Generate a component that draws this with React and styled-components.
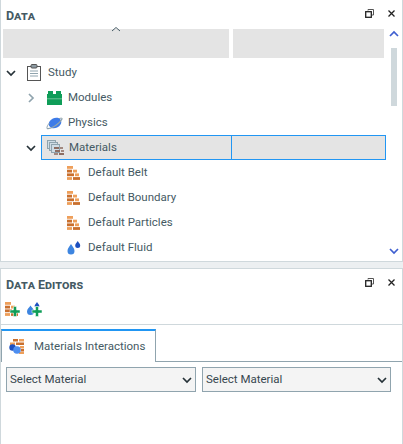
import styled, { createGlobalStyle } from 'styled-components'

const GlobalStyle = createGlobalStyle`
  html, body { margin: 0; padding: 0; background: #eceff1; }
  * { box-sizing: border-box; }
`

const Page = styled.div`
  width: 403px;
  height: 444px;
  overflow: hidden;
  display: flex;
  flex-direction: column;
  gap: 6px;
  font-family: Roboto, 'Liberation Sans', sans-serif;
  font-size: 11.5px;
  color: #455a64;
  background: #eceff1;
`
const Panel = styled.section`
  height: ${(p) => p.$height}px;
  background: #fff;
  border: 1px solid #cfd8dc;
  border-top: ${(p) => (p.$top ? '1px solid #cfd8dc' : 'none')};
  border-bottom: ${(p) => (p.$bottom ? '1px solid #cfd8dc' : 'none')};
  display: flex;
  flex-direction: column;
  flex: none;
`
const TitleBar = styled.header`
  height: 29px;
  flex: none;
  display: flex;
  align-items: center;
  justify-content: space-between;
  padding: 0 7px 0 5px;
`
const Title = styled.h2`
  margin: 2px 0 0;
  font-size: 12.5px;
  line-height: 16px;
  font-weight: 700;
  font-variant: small-caps;
  color: #455a64;
`
const WindowButtons = styled.div`
  display: flex;
  align-items: center;
  gap: 14px;
  margin-top: -2px;
`
const DataBody = styled.div`
  flex: 1;
  display: flex;
  min-height: 0;
`
const TreeArea = styled.div`
  width: 386px;
  padding-left: 2px;
`
const HeaderRow = styled.div`
  display: flex;
  gap: 4px;
  height: 29px;
`
const HeaderCell = styled.div`
  width: ${(p) => p.$width}px;
  background: #e4e4e4;
  display: flex;
  justify-content: center;
`
const SortCaret = styled.svg`
  margin-top: -3px;
`
const Tree = styled.div`
  padding-top: 2px;
`
const Row = styled.div`
  height: 25px;
  display: flex;
  align-items: center;
  padding-left: ${(p) => p.$indent}px;
`
const Toggle = styled.span`
  width: 14px;
  margin-right: ${(p) => p.$gap}px;
  flex: none;
  display: flex;
  justify-content: center;
`
const SelectedCell = styled.div`
  width: 345px;
  height: 25px;
  display: flex;
  align-items: center;
  background: #e4e4e4;
  border: 1px solid #2196f3;
  padding-left: 5px;
`
const ColumnDivider = styled.span`
  margin-left: auto;
  margin-right: 153px;
  width: 1px;
  align-self: stretch;
  background: #2196f3;
`
const IconSlot = styled.span`
  width: ${(p) => p.$width}px;
  flex: none;
  display: flex;
  align-items: center;
`
const Label = styled.span`
  line-height: 16px;
  white-space: nowrap;
  margin-top: -1px;
`
const ScrollTrack = styled.div`
  width: 12px;
  margin-left: 1px;
  display: flex;
  flex-direction: column;
  align-items: center;
  padding-bottom: 5px;
`
const ScrollThumb = styled.div`
  width: 6px;
  height: 58px;
  margin-top: 9px;
  background: #cfd8dc;
`
const ScrollSpacer = styled.div`
  flex: 1;
`
const Toolbar = styled.div`
  height: 27px;
  flex: none;
  display: flex;
  align-items: center;
  gap: 7px;
  padding: 0 0 4px 4px;
  border-bottom: 1px solid #cfd8dc;
`
const TabStrip = styled.div`
  height: 37px;
  flex: none;
  padding-top: 4px;
  border-bottom: 1px solid #90a4ae;
`
const Tab = styled.div`
  width: 155px;
  height: 33px;
  display: flex;
  align-items: center;
  gap: 9px;
  padding-left: 7px;
  background: #fff;
  border: 1px solid #90a4ae;
  border-top: 2px solid #2196f3;
  border-bottom: none;
`
const Selects = styled.div`
  display: flex;
  gap: 6px;
  padding: 5px 0 0 5px;
`
const SelectBox = styled.div`
  width: ${(p) => p.$width}px;
  height: 25px;
  display: flex;
  align-items: center;
  justify-content: space-between;
  padding: 0 3px;
  background: #f4f4f4;
  border: 1px solid #90a4ae;
  color: #37474f;
`

const Chevron = ({ dir = 'down', color = '#263238' }) => {
  const points = {
    down: '1,3 5,7 9,3',
    up: '1,7 5,3 9,7',
    right: '3,1 7,5 3,9',
  }
  return (
    <svg width="10" height="10" viewBox="0 0 10 10">
      <polyline points={points[dir]} fill="none" stroke={color} strokeWidth="1.7" />
    </svg>
  )
}

const RestoreIcon = () => (
  <svg width="9" height="9" viewBox="0 0 9 9">
    <path d="M3 1.500V.5h5.500v5.500H7" fill="none" stroke="#555" />
    <rect x=".7" y="2.700" width="5.600" height="5.600" fill="none" stroke="#222" strokeWidth="1.300" />
  </svg>
)

const CloseIcon = () => (
  <svg width="7" height="7" viewBox="0 0 7 7">
    <path d="M.5.5l6 6M6.500.5l-6 6" stroke="#222" strokeWidth="1.300" />
  </svg>
)

const ClipboardIcon = () => (
  <svg width="14" height="17" viewBox="0 0 14 17">
    <rect x=".5" y="2.500" width="13" height="14" fill="#fff" stroke="#555" />
    <rect x="4" y=".5" width="6" height="3.500" rx="1" fill="#8d9ba3" stroke="#555" />
    <path d="M3 7h8M3 9.500h8M3 12h8" stroke="#90a4ae" />
  </svg>
)

const ModulesIcon = () => (
  <svg width="15" height="14" viewBox="0 0 15 14">
    <path d="M0 3h1V0h5v3h3V0h5v3h1v11H0z" fill="#0f9d58" />
    <rect x="0" y="7.500" width="15" height=".7" fill="#8fd3b0" />
  </svg>
)

const PhysicsIcon = () => (
  <svg width="17" height="14" viewBox="0 0 17 14">
    <ellipse cx="9" cy="7" rx="6.500" ry="5" transform="rotate(-25 9 7)" fill="#3d7be8" />
    <path d="M1 12.500C4 13.500 13 9 16.300 2.500" fill="none" stroke="#90a4ae" strokeWidth="1.200" />
    <path d="M1 12.500C.5 11 2 8.500 3.500 7M13 2.600c1.500-.5 3-.5 3.300-.1" fill="none" stroke="#90a4ae" strokeWidth="1" />
  </svg>
)

const BrickRows = () => (
  <g>
    <rect x="0" y="0" width="6" height="2.800" fill="#ee9f5a" />
    <rect x="0" y="3.700" width="5" height="2.800" fill="#c96f2d" />
    <rect x="6" y="3.700" width="4" height="2.800" fill="#ee9f5a" />
    <rect x="0" y="7.400" width="7" height="2.800" fill="#c96f2d" />
    <rect x="8" y="7.400" width="4" height="2.800" fill="#ee9f5a" />
    <rect x="0" y="11.100" width="5" height="2.800" fill="#ee9f5a" />
    <rect x="6" y="11.100" width="7" height="2.800" fill="#c96f2d" />
  </g>
)

const BrickIcon = () => (
  <svg width="13" height="14" viewBox="0 0 13 14">
    <BrickRows />
  </svg>
)

const DropsIcon = () => (
  <svg width="14" height="14" viewBox="0 0 14 14">
    <path d="M4 3C2.500 5.700.5 7.200.5 10a3.500 3.500 0 0 0 7 0C7.500 7.200 5.500 5.700 4 3z" fill="#3d85e0" />
    <path d="M10.700 0C9.700 1.700 8.200 2.800 8.200 4.500a2.500 2.500 0 0 0 5 0c0-1.700-1.500-2.800-2.500-4.500z" fill="#1c4fc0" />
  </svg>
)

const MaterialsIcon = () => (
  <svg width="17" height="16" viewBox="0 0 17 16">
    <rect x=".5" y=".5" width="8" height="8" fill="#cfdde6" stroke="#90a4ae" />
    <rect x="2.500" y="2.500" width="8" height="8" fill="#cfdde6" stroke="#90a4ae" />
    <rect x="4.500" y="4.500" width="8" height="8" fill="#cfdde6" stroke="#90a4ae" />
    <rect x="7" y="7" width="5" height="2" fill="#8d6e63" />
    <rect x="13" y="7" width="3" height="2" fill="#a1887f" />
    <rect x="8" y="10" width="5" height="2" fill="#8d6e63" />
    <rect x="14" y="10" width="3" height="2" fill="#a1887f" />
    <rect x="7" y="13" width="4" height="2" fill="#a1887f" />
    <rect x="12" y="13" width="5" height="2" fill="#8d6e63" />
  </svg>
)

const GreenPlus = () => (
  <path d="M8.500 4.500h3V8H15v3h-3.500v3.500h-3V11H5V8h3.500z" fill="#0f9d58" stroke="#fff" strokeWidth=".5" />
)

const AddBrickIcon = () => (
  <svg width="15" height="15" viewBox="0 0 15 15">
    <BrickRows />
    <GreenPlus />
  </svg>
)

const AddDropIcon = () => (
  <svg width="15" height="15" viewBox="0 0 15 15">
    <path d="M3.500 3.500C2.300 5.500 0 7 0 9.500a3.500 3.500 0 0 0 7 0C7 7 4.700 5.500 3.500 3.500z" fill="#3d85e0" />
    <path d="M10 0C9 1.800 7.500 3 7.500 4.500h5C12.500 3 11 1.800 10 0z" fill="#1c4fc0" />
    <GreenPlus />
  </svg>
)

const InteractionsIcon = () => (
  <svg width="16" height="15" viewBox="0 0 16 15">
    <rect x="4" y="0" width="5" height="2.500" fill="#c96f2d" />
    <rect x="10" y="0" width="5" height="2.500" fill="#ee9f5a" />
    <rect x="1" y="3.500" width="5" height="2.500" fill="#ee9f5a" />
    <rect x="7" y="3.500" width="8" height="2.500" fill="#c96f2d" />
    <rect x="11" y="7" width="4" height="2.500" fill="#ee9f5a" />
    <rect x="12" y="10" width="3" height="2.500" fill="#c96f2d" />
    <rect x="10" y="12.800" width="5" height="2.200" fill="#ee9f5a" />
    <circle cx="3.500" cy="8.500" r="3.200" fill="#1c4fc0" />
    <circle cx="8" cy="11" r="3.800" fill="#4d8ef0" />
  </svg>
)

const defaults = [
  { name: 'Default Belt', icon: <BrickIcon /> },
  { name: 'Default Boundary', icon: <BrickIcon /> },
  { name: 'Default Particles', icon: <BrickIcon /> },
  { name: 'Default Fluid', icon: <DropsIcon /> },
]

export default function App() {
  return (
    <Page>
      <GlobalStyle />
      <Panel $height={262} $bottom>
        <TitleBar>
          <Title>Data</Title>
          <WindowButtons>
            <RestoreIcon />
            <CloseIcon />
          </WindowButtons>
        </TitleBar>
        <DataBody>
          <TreeArea>
            <HeaderRow>
              <HeaderCell $width={226}>
                <SortCaret width="10" height="6" viewBox="0 0 10 6">
                  <polyline points="1,5 5,1.500 9,5" fill="none" stroke="#455a64" />
                </SortCaret>
              </HeaderCell>
              <HeaderCell $width={151} />
            </HeaderRow>
            <Tree>
              <Row $indent={1}>
                <Toggle $gap={9}><Chevron /></Toggle>
                <IconSlot $width={21}><ClipboardIcon /></IconSlot>
                <Label>Study</Label>
              </Row>
              <Row $indent={21}>
                <Toggle $gap={9}><Chevron dir="right" color="#90a4ae" /></Toggle>
                <IconSlot $width={21}><ModulesIcon /></IconSlot>
                <Label>Modules</Label>
              </Row>
              <Row $indent={43}>
                <IconSlot $width={22}><PhysicsIcon /></IconSlot>
                <Label>Physics</Label>
              </Row>
              <Row $indent={21}>
                <Toggle $gap={3}><Chevron /></Toggle>
                <SelectedCell>
                  <IconSlot $width={22}><MaterialsIcon /></IconSlot>
                  <Label>Materials</Label>
                  <ColumnDivider />
                </SelectedCell>
              </Row>
              {defaults.map((item) => (
                <Row $indent={64} key={item.name}>
                  <IconSlot $width={21}>{item.icon}</IconSlot>
                  <Label>{item.name}</Label>
                </Row>
              ))}
            </Tree>
          </TreeArea>
          <ScrollTrack>
            <Chevron dir="up" color="#3f5fd0" />
            <ScrollThumb />
            <ScrollSpacer />
            <Chevron color="#3f5fd0" />
          </ScrollTrack>
        </DataBody>
      </Panel>
      <Panel $height={176} $top>
        <TitleBar>
          <Title>Data Editors</Title>
          <WindowButtons>
            <RestoreIcon />
            <CloseIcon />
          </WindowButtons>
        </TitleBar>
        <Toolbar>
          <AddBrickIcon />
          <AddDropIcon />
        </Toolbar>
        <TabStrip>
          <Tab>
            <InteractionsIcon />
            <Label>Materials Interactions</Label>
          </Tab>
        </TabStrip>
        <Selects>
          <SelectBox $width={190}>
            <Label>Select Material</Label>
            <Chevron />
          </SelectBox>
          <SelectBox $width={189}>
            <Label>Select Material</Label>
            <Chevron />
          </SelectBox>
        </Selects>
      </Panel>
    </Page>
  )
}
